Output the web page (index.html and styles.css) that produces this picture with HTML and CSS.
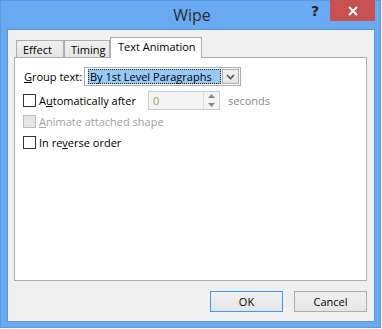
FILE: index.html
```html
<!DOCTYPE html>
<html>
<head>
<meta charset="utf-8">
<link rel="stylesheet" href="styles.css">
</head>
<body>
<div class="window">
  <div class="titlebar">
    <div class="tb-side"></div>
    <div class="title">Wipe</div>
    <div class="tb-side controls">
      <span class="help">?</span>
      <span class="close"><svg width="10" height="10" viewBox="0 0 10 10"><path d="M1 1 L9 9 M9 1 L1 9" stroke="#fff" stroke-width="2" fill="none"/></svg></span>
    </div>
  </div>
  <div class="client">
    <div class="tabs">
      <div class="tab tab-effect">Effect</div>
      <div class="tab tab-timing">Timing</div>
      <div class="tab tab-active">Text Animation</div>
    </div>
    <div class="panel">
      <div class="row row-group">
        <span class="lbl"><u>G</u>roup text:</span>
        <div class="combo">
          <span class="combo-value"><span class="sel">By 1st Level Paragraphs</span></span>
          <span class="combo-btn"><svg width="9" height="6" viewBox="0 0 9 6"><path d="M1 1 L4.5 4.5 L8 1" stroke="#555" stroke-width="1.6" fill="none"/></svg></span>
        </div>
      </div>
      <div class="row">
        <div class="check check-wide"><span class="cb"></span><span class="cb-label">A<u>u</u>tomatically after</span></div>
        <div class="spin">
          <span class="spin-value">0</span>
          <span class="spin-btns">
            <span class="spin-btn"><svg width="7" height="4" viewBox="0 0 7 4"><path d="M0 4 L3.5 0 L7 4 Z" fill="#8a8a8a"/></svg></span>
            <span class="spin-btn"><svg width="7" height="4" viewBox="0 0 7 4"><path d="M0 0 L3.5 4 L7 0 Z" fill="#8a8a8a"/></svg></span>
          </span>
        </div>
        <span class="units">seconds</span>
      </div>
      <div class="row">
        <div class="check disabled"><span class="cb"></span><span class="cb-label"><u>A</u>nimate attached shape</span></div>
      </div>
      <div class="row">
        <div class="check"><span class="cb"></span><span class="cb-label">In re<u>v</u>erse order</span></div>
      </div>
    </div>
    <div class="buttons">
      <button class="btn btn-default">OK</button>
      <button class="btn">Cancel</button>
    </div>
  </div>
</div>
</body>
</html>
```
FILE: styles.css
```css
* { box-sizing: border-box; }
html, body { margin: 0; padding: 0; background: #ffffff; }
body {
  font-family: "Open Sans", "Noto Sans", sans-serif;
  font-size: 11px;
  color: #000;
}
.window {
  width: 381px;
  height: 328px;
  background: #6aaaf2;
  border: 1px solid #5a9be6;
  padding: 0 5px 5px 6px;
  display: flex;
  flex-direction: column;
}
.titlebar {
  height: 29px;
  margin-top: -1px;
  display: grid;
  grid-template-columns: 1fr auto 1fr;
  align-items: start;
}
.title {
  font-size: 16px;
  color: #2b2b2b;
  line-height: 31px;
  padding-left: 2px;
}
.controls {
  display: flex;
  justify-content: flex-end;
  align-items: flex-start;
}
.help {
  font-family: "DejaVu Sans", sans-serif;
  font-weight: bold;
  font-size: 14px;
  color: #222;
  margin-top: 3px;
  margin-right: 11px;
}
.close {
  width: 45px;
  height: 21px;
  background: #c75050;
  display: flex;
  align-items: center;
  justify-content: center;
}
.client {
  flex: 1;
  background: #f0f0f0;
  border: 1px solid #5b96d8;
  padding: 7px 7px 8px 6px;
  display: flex;
  flex-direction: column;
}
.tabs {
  height: 20px;
  display: flex;
  align-items: flex-end;
  padding-left: 2px;
  position: relative;
  z-index: 1;
}
.tab {
  height: 17px;
  border: 1px solid #acacac;
  border-bottom: none;
  background: linear-gradient(#f0f0f0, #e5e5e5);
  padding-left: 6px;
  line-height: 18px;
  white-space: nowrap;
}
.tab-effect { width: 48px; }
.tab-timing { width: 46px; }
.tab-active {
  width: 92px;
  height: 21px;
  margin-bottom: -1px;
  background: #ffffff;
  padding-left: 7px;
  line-height: 18px;
}
.panel {
  height: 224px;
  background: #ffffff;
  border: 1px solid #acacac;
  padding: 9px 8px 0 8px;
}
.row {
  height: 21px;
  display: flex;
  align-items: center;
}
.row-group {
  height: 19px;
  margin-bottom: 4px;
}
.lbl {
  width: 61px;
  padding-left: 1px;
}
.combo {
  width: 157px;
  height: 19px;
  border: 1px solid #acacac;
  background: #ffffff;
  display: flex;
  align-items: center;
  padding: 1px 1px 1px 3px;
}
.combo-value {
  flex: 1;
  height: 15px;
  border: 1px dotted #222;
  background: #99c9f6;
  display: flex;
  align-items: center;
  margin-right: 1px;
}
.sel { padding-left: 1px; line-height: 13px; }
.combo-btn {
  width: 17px;
  height: 15px;
  border: 1px solid #acacac;
  background: linear-gradient(#f2f2f2, #e4e4e4);
  display: flex;
  align-items: center;
  justify-content: center;
}
.check {
  display: flex;
  align-items: center;
}
.check-wide { width: 125px; }
.cb {
  width: 13px;
  height: 13px;
  border: 1px solid #333333;
  background: #ffffff;
  margin-right: 3px;
  flex: none;
}
.disabled .cb {
  border-color: #bcbcbc;
  background: #e6e6e6;
}
.disabled .cb-label { color: #a0a0a0; }
.spin {
  width: 72px;
  height: 19px;
  border: 1px solid #c5ced9;
  background: #f4f4f4;
  display: flex;
}
.spin-value {
  flex: 1;
  color: #b09a6a;
  padding-left: 4px;
  line-height: 17px;
}
.spin-btns {
  width: 16px;
  display: flex;
  flex-direction: column;
  border-left: 1px solid #dcdcdc;
}
.spin-btn {
  flex: 1;
  display: flex;
  align-items: center;
  justify-content: center;
}
.units {
  color: #8c8c8c;
  margin-left: 8px;
}
.buttons {
  margin-top: 10px;
  display: flex;
  justify-content: flex-end;
  gap: 11px;
}
.btn {
  width: 73px;
  height: 21px;
  border: 1px solid #acacac;
  background: linear-gradient(#f0f0f0, #e5e5e5);
  font-family: "Open Sans", "Noto Sans", sans-serif;
  font-size: 11px;
  color: #000;
  padding: 0;
  margin: 0;
}
.btn-default { border-color: #3c99f0; }
u { text-decoration: underline; text-underline-offset: 1px; }
```
